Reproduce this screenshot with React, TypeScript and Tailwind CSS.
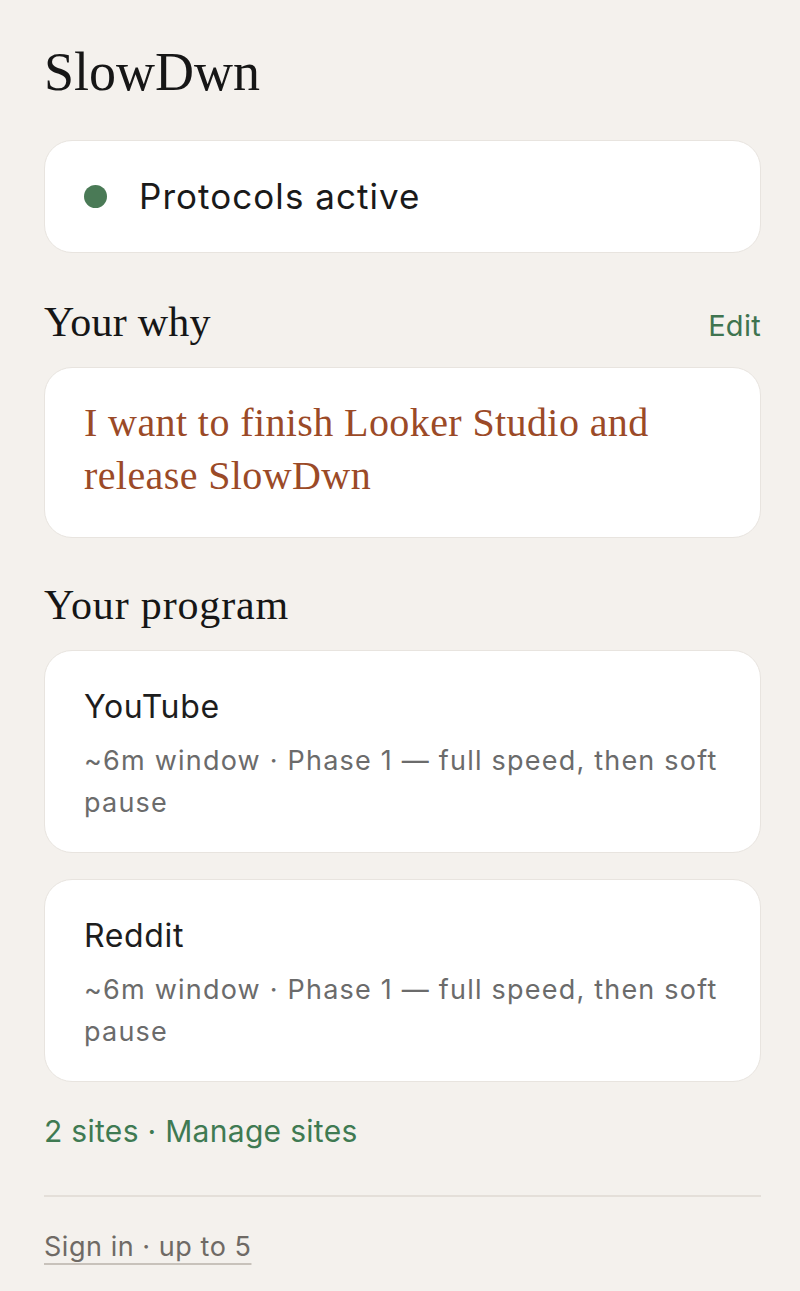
const serif = "font-['Liberation_Serif',Georgia,serif]";
const sans = "font-['Inter','Liberation_Sans',Arial,sans-serif]";

interface Site {
  name: string;
  detail: string;
}

const sites: Site[] = [
  { name: "YouTube", detail: "~6m window · Phase 1 — full speed, then soft pause" },
  { name: "Reddit", detail: "~6m window · Phase 1 — full speed, then soft pause" },
];

function SiteCard({ site }: { site: Site }) {
  return (
    <div className="h-[203px] rounded-[28px] border border-[#e8e4df] bg-white px-[39px] pt-[36px]">
      <div className="text-[32px] leading-[40px] tracking-[0.02em] text-[#1d1d1d]">{site.name}</div>
      <div className="mt-[13px] text-[27px] leading-[42px] tracking-[0.045em] text-[#6b6b6b]">
        {site.detail}
      </div>
    </div>
  );
}

export default function App() {
  return (
    <div className={`min-h-screen bg-[#f4f1ed] pl-[44px] pr-[39px] pt-[44px] ${sans}`}>
      <h1 className={`${serif} text-[54px] leading-[56px] text-[#161616]`}>SlowDwn</h1>

      <div className="mt-[40px] flex h-[113px] items-center gap-[32px] rounded-[28px] border border-[#e8e4df] bg-white px-[39px]">
        <span className="h-[23px] w-[23px] rounded-full bg-[#4a7a56]" />
        <span className="text-[35px] tracking-[0.03em] text-[#1a1a1a]">Protocols active</span>
      </div>

      <div className="mt-[47px] flex items-baseline justify-between">
        <h2 className={`${serif} text-[42px] leading-[44px] tracking-[0.005em] text-[#161616]`}>Your why</h2>
        <span className="text-[29px] tracking-[0.01em] text-[#3f7450]">Edit</span>
      </div>

      <div className="mt-[19px] h-[171px] rounded-[28px] border border-[#e8e4df] bg-white px-[39px] pt-[28px]">
        <p className={`${serif} text-[40px] leading-[53px] tracking-[0.01em] text-[#9b4a27]`}>
          I want to finish Looker Studio and release SlowDwn
        </p>
      </div>

      <h2 className={`${serif} mt-[45px] text-[42px] leading-[44px] tracking-[0.02em] text-[#161616]`}>
        Your program
      </h2>

      <div className="mt-[23px] flex flex-col gap-[26px]">
        {sites.map((s) => (
          <SiteCard key={s.name} site={s} />
        ))}
      </div>

      <div className="mt-[29px] text-[30px] leading-[40px] tracking-[0.01em] text-[#3f7a52]">
        2 sites · <span>Manage sites</span>
      </div>

      <div className="mt-[44px] border-t-2 border-[#e4dfd9]" />

      <div className="pt-[32px] pb-[40px]">
        <span className="text-[27px] leading-[36px] tracking-[0.02em] text-[#6f6a65] underline decoration-[#c8c2bb] decoration-2 underline-offset-[7px]">
          Sign in · up to 5
        </span>
      </div>
    </div>
  );
}
